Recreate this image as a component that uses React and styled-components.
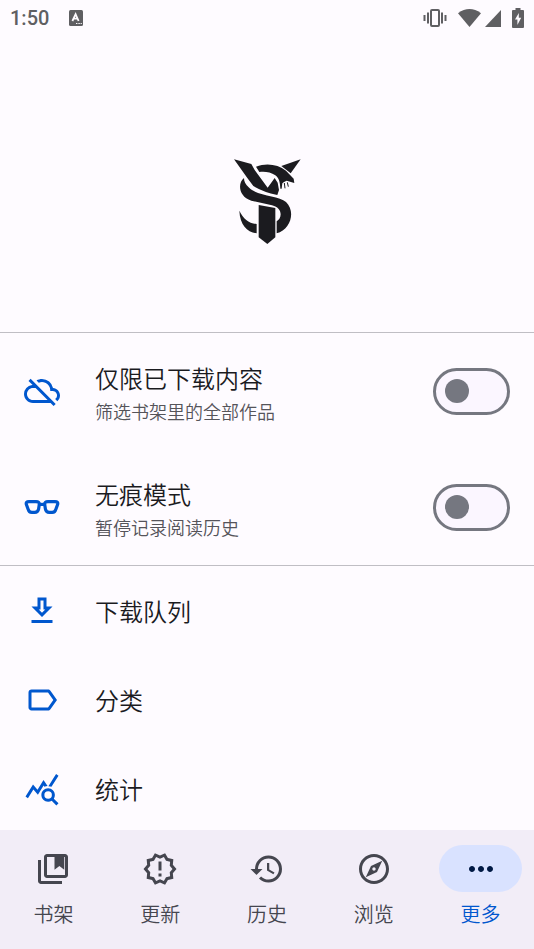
import React, {useState} from 'react'
import styled, {createGlobalStyle} from 'styled-components'
import {
  MdHistory,
  MdMoreHoriz,
  MdOutlineCloudOff,
  MdOutlineExplore,
  MdOutlineGetApp,
  MdOutlineLabel,
  MdOutlineNewReleases,
  MdQueryStats
} from 'react-icons/md'

const GlobalStyle = createGlobalStyle`
  *, *::before, *::after {
    box-sizing: border-box;
  }

  body {
    background-color: #fefbff;
    color: #1b1b1f;
    font-family: Roboto, 'Noto Sans CJK SC', sans-serif;
    margin: 0;
  }
`

const Screen = styled.div`
  display: flex;
  flex-direction: column;
  height: 100vh;
`

const StatusBar = styled.header`
  align-items: center;
  color: #5f5f62;
  display: flex;
  flex: none;
  height: 36px;
  justify-content: space-between;
  padding: 0 10px;
`

const StatusGroup = styled.div`
  align-items: center;
  display: flex;
  gap: ${({$gap}) => $gap}px;
`

const Clock = styled.time`
  font-size: 20px;
  font-weight: 500;
  line-height: 36px;
`

const Content = styled.main`
  flex: 1;
  min-height: 0;
  overflow-y: auto;
  scrollbar-width: none;
`

const LogoHeader = styled.div`
  align-items: center;
  border-bottom: 1px solid #c0bec4;
  display: flex;
  height: 297px;
  justify-content: center;
  padding-top: 32px;
`

const List = styled.ul`
  border-bottom: ${({$divider}) => ($divider ? '1px solid #c0bec4' : 'none')};
  list-style: none;
  margin: 0;
  padding: 0;
`

const SwitchRow = styled.label`
  align-items: center;
  cursor: pointer;
  display: flex;
  height: 116px;
  padding: 0 24px;
`

const LinkRow = styled.a`
  align-items: center;
  color: inherit;
  display: flex;
  height: 89px;
  padding: 0 24px;
  text-decoration: none;
`

const RowIcon = styled.span`
  color: #0057ce;
  display: flex;
  flex: none;
  font-size: 36px;
  margin-right: 35px;
`

const RowText = styled.span`
  display: flex;
  flex: 1;
  flex-direction: column;
  padding-top: ${({$single}) => ($single ? 4 : 8)}px;
`

const Title = styled.span`
  font-size: 24px;
  font-weight: 350;
  line-height: 36px;
`

const Subtitle = styled.span`
  color: #55545a;
  font-size: 18px;
  font-weight: 350;
  line-height: 30px;
`

const Switch = styled.input`
  appearance: none;
  background-color: #fbf6ff;
  border: 3px solid #757780;
  border-radius: 24px;
  cursor: pointer;
  display: flex;
  align-items: center;
  flex: none;
  height: 47px;
  margin: 0;
  padding: 0 9px;
  width: 77px;

  &::before {
    background-color: #757780;
    border-radius: 50%;
    content: '';
    height: 24px;
    width: 24px;
  }

  &:checked {
    background-color: #0057ce;
    border-color: #0057ce;
    justify-content: flex-end;
  }

  &:checked::before {
    background-color: #fff;
  }
`

const BottomNav = styled.nav`
  background-color: #f2edf7;
  display: flex;
  flex: none;
  height: 119px;
  padding-top: 15px;
`

const NavButton = styled.button`
  align-items: center;
  background: none;
  border: 0;
  color: ${({$active}) => ($active ? '#0057ce' : '#45464f')};
  cursor: pointer;
  display: flex;
  flex: 1;
  flex-direction: column;
  font-family: inherit;
  font-size: 20px;
  font-weight: 350;
  gap: 8px;
  line-height: 30px;
  padding: 0;
`

const Pill = styled.span`
  align-items: center;
  background-color: ${({$active}) => ($active ? '#d9e2ff' : 'transparent')};
  border-radius: 24px;
  color: ${({$active}) => ($active ? '#001944' : 'inherit')};
  display: flex;
  font-size: 36px;
  height: 47px;
  justify-content: center;
  width: 83px;
`

const KeyboardIcon = () => (
  <svg width='14' height='16' viewBox='0 0 14 16' aria-hidden='true'>
    <rect width='14' height='16' rx='1.5' fill='currentColor' />
    <path d='M3.4 11 6.6 4.2 9.6 11M4.8 8.6H8.6' fill='none' stroke='#fefbff' strokeWidth='1.8' />
    <path d='M7 13.5h1.4M9.4 13.5h1.4M11.6 13.5h1.2' stroke='#fefbff' strokeWidth='1.2' />
  </svg>
)

const VibrateIcon = () => (
  <svg width='24' height='18' viewBox='0 0 24 18' fill='none' stroke='currentColor' strokeWidth='2' aria-hidden='true'>
    <rect x='8' y='1' width='8' height='16' rx='1' />
    <path d='M5 3.5v11M19 3.5v11M1.5 6v6M22.5 6v6' />
  </svg>
)

const WifiIcon = () => (
  <svg width='23' height='18' viewBox='0 0 23 18' fill='currentColor' aria-hidden='true'>
    <path d='M11.5 18 0 4.2Q11.5-4.2 23 4.2Z' />
  </svg>
)

const SignalIcon = () => (
  <svg width='16' height='18' viewBox='0 0 16 18' fill='currentColor' aria-hidden='true'>
    <path d='M16 1V18H0Z' />
  </svg>
)

const BatteryIcon = () => (
  <svg width='12' height='20' viewBox='0 0 12 20' fill='currentColor' aria-hidden='true'>
    <path d='M3.5 0h5v2H11q1 0 1 1v16q0 1-1 1H1q-1 0-1-1V3q0-1 1-1h2.5Z' />
    <path d='M6.8 5 3 11.4h2.4V17L9.2 9.8H6.8Z' fill='#fefbff' />
  </svg>
)

const GlassesIcon = () => (
  <svg width='36' height='36' viewBox='0 0 36 36' fill='none' stroke='currentColor' strokeWidth='3.2' aria-hidden='true'>
    <path d='M5 12.6H12Q15.7 12.6 15.3 15.6L14.6 20Q14 23.4 10.7 23.4H7.8Q4.9 23.4 4.2 20.4L2.4 15.6Q1.5 12.6 5 12.6Z' />
    <path d='M31 12.6H24Q20.3 12.6 20.7 15.6L21.4 20Q22 23.4 25.3 23.4H28.2Q31.1 23.4 31.8 20.4L33.6 15.6Q34.5 12.6 31 12.6Z' />
    <path d='M15 15.4H21' />
  </svg>
)

const LibraryIcon = () => (
  <svg width='36' height='36' viewBox='0 0 24 24' fill='currentColor' aria-hidden='true'>
    <path d='M4 6H2v14c0 1.1.9 2 2 2h14v-2H4V6z' />
    <path d='M20 2H8c-1.1 0-2 .9-2 2v12c0 1.1.9 2 2 2h12c1.1 0 2-.9 2-2V4c0-1.1-.9-2-2-2zm0 14H8V4h12v12z' />
    <path d='M13 3.5h6.5v9L16.25 10 13 12.5z' />
  </svg>
)

const Logo = () => (
  <svg width='90' height='100' viewBox='0 0 270 300' fill='#1b1b1f' role='img' aria-label='Logo'>
    <path d='M36 28 88 42 98 60 137 113 158 84 167 98 171 120 166 135Q124 126 94 108L76 84Z' />
    <path d='M236 28 178 48 206 70Z' />
    <path d='M102 50C135 38 168 44 192 62L215 86 217 99 194 92 186 96 181 100 179 116 175 116C174 100 173 86 160 76 146 66 128 64 112 66Z' />
    <path d='M187 99 189 115M196 97 199 110' fill='none' stroke='#1b1b1f' strokeWidth='3' />
    <path d='M66 84C46 100 50 140 88 152L150 166C184 174 180 206 164 214V250C206 240 222 184 192 156 170 136 106 140 80 112 70 102 66 94 66 84Z' />
    <path d='M110 165 160 174V262L136 282 110 262Z' />
    <path d='M52 182C54 226 76 246 104 250V222C80 220 64 206 52 182Z' />
  </svg>
)

const switches = [
  {id: 'downloaded', title: '仅限已下载内容', subtitle: '筛选书架里的全部作品', Icon: MdOutlineCloudOff},
  {id: 'incognito', title: '无痕模式', subtitle: '暂停记录阅读历史', Icon: GlassesIcon}
]

const links = [
  {id: 'queue', title: '下载队列', Icon: MdOutlineGetApp},
  {id: 'categories', title: '分类', Icon: MdOutlineLabel},
  {id: 'stats', title: '统计', Icon: MdQueryStats}
]

const tabs = [
  {id: 'library', title: '书架', Icon: LibraryIcon},
  {id: 'updates', title: '更新', Icon: MdOutlineNewReleases},
  {id: 'history', title: '历史', Icon: MdHistory},
  {id: 'browse', title: '浏览', Icon: MdOutlineExplore},
  {id: 'more', title: '更多', Icon: MdMoreHoriz}
]

const App = () => {
  const [tab, setTab] = useState('more')

  return (
    <Screen>
      <GlobalStyle />
      <StatusBar>
        <StatusGroup $gap={20}>
          <Clock>1:50</Clock>
          <KeyboardIcon />
        </StatusGroup>
        <StatusGroup $gap={11}>
          <VibrateIcon />
          <StatusGroup $gap={4}>
            <WifiIcon />
            <SignalIcon />
          </StatusGroup>
          <BatteryIcon />
        </StatusGroup>
      </StatusBar>
      <Content>
        <LogoHeader>
          <Logo />
        </LogoHeader>
        <List $divider>
          {switches.map(({id, title, subtitle, Icon}) => (
            <li key={id}>
              <SwitchRow htmlFor={id}>
                <RowIcon><Icon /></RowIcon>
                <RowText>
                  <Title>{title}</Title>
                  <Subtitle>{subtitle}</Subtitle>
                </RowText>
                <Switch type='checkbox' role='switch' id={id} />
              </SwitchRow>
            </li>
          ))}
        </List>
        <List>
          {links.map(({id, title, Icon}) => (
            <li key={id}>
              <LinkRow href={`#${id}`}>
                <RowIcon><Icon /></RowIcon>
                <RowText $single>
                  <Title>{title}</Title>
                </RowText>
              </LinkRow>
            </li>
          ))}
        </List>
      </Content>
      <BottomNav>
        {tabs.map(({id, title, Icon}) => (
          <NavButton key={id} type='button' $active={id === tab} onClick={() => setTab(id)}>
            <Pill $active={id === tab}><Icon /></Pill>
            {title}
          </NavButton>
        ))}
      </BottomNav>
    </Screen>
  )
}

export default App
